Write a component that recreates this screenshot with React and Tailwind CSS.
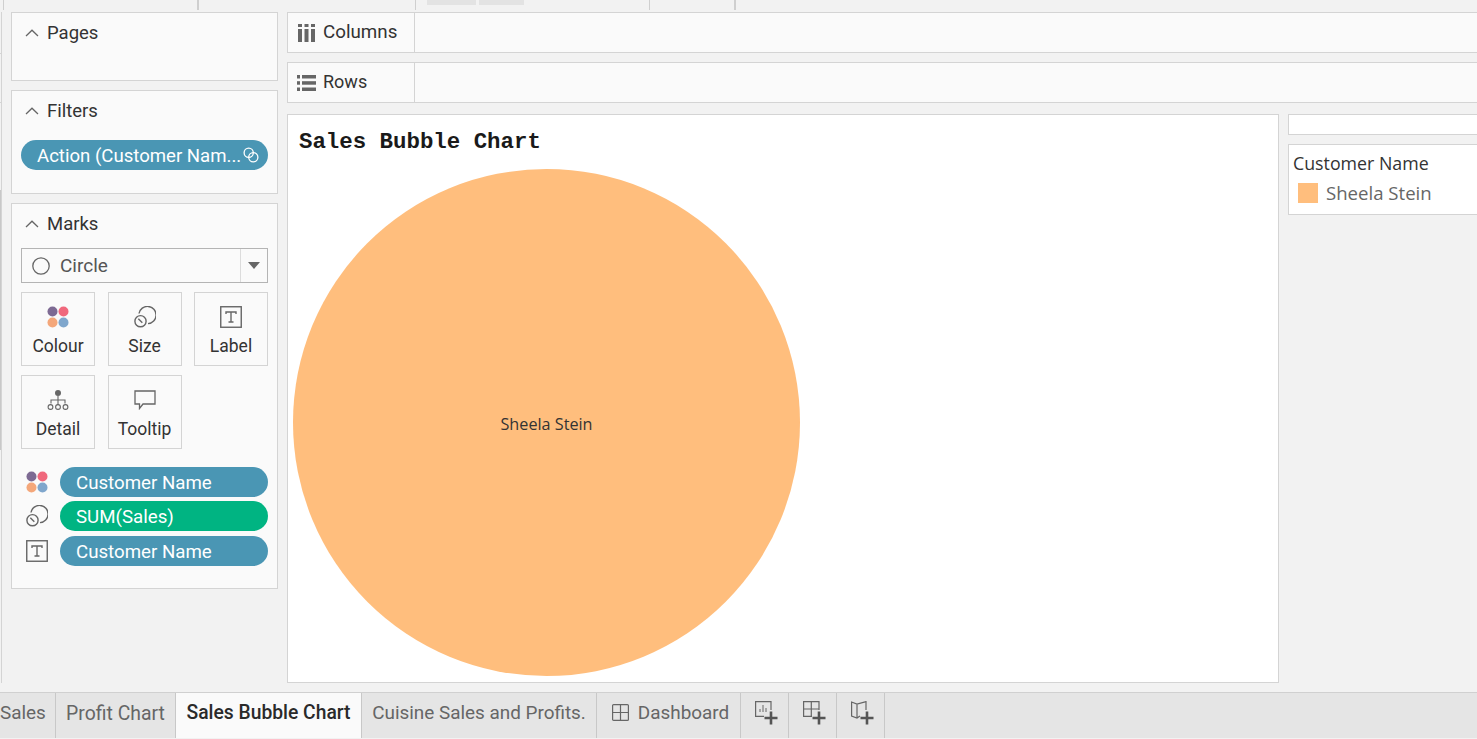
import React from "react";

const sans = "font-['Roboto','Liberation_Sans',sans-serif]";

function Chevron() {
  return (
    <svg width="14" height="8" viewBox="0 0 14 8" className="shrink-0" fill="none" stroke="#666" strokeWidth="1.3">
      <path d="M1 7 L7 1.2 L13 7" />
    </svg>
  );
}
function ColourIcon() {
  return (
    <svg width="22" height="22" viewBox="0 0 22 22">
      <circle cx="5.5" cy="5.5" r="5" fill="#7d6a93" />
      <circle cx="16.5" cy="5.5" r="5" fill="#f0687c" />
      <circle cx="5.5" cy="16.5" r="5" fill="#f4a77a" />
      <circle cx="16.5" cy="16.5" r="5" fill="#7fa6cc" />
    </svg>
  );
}
function SizeIcon() {
  return (
    <svg width="22" height="22" viewBox="0 0 22 22" fill="none" stroke="#666" strokeWidth="1.4">
      <path d="M5 7.5 A8.6 8.6 0 1 1 14 17.6" />
      <circle cx="6.5" cy="15.2" r="5.6" />
      <path d="M4.3 12.8 L8.3 16.8" />
    </svg>
  );
}
function LabelIcon() {
  return (
    <svg width="22" height="22" viewBox="0 0 22 22" fill="none" stroke="#666">
      <rect x="0.75" y="0.75" width="20.5" height="20.5" strokeWidth="1.4" />
      <path d="M6 8 V6 H16 V8 M11 6 V16 M8.5 16 H13.5" strokeWidth="1.4" />
    </svg>
  );
}
function DetailIcon() {
  return (
    <svg width="22" height="22" viewBox="0 0 22 22" fill="none" stroke="#666" strokeWidth="1.1">
      <circle cx="11" cy="4" r="3" fill="#666" stroke="none" />
      <path d="M11 7 V16 M4 14.5 V11 H18 V14.5" />
      <circle cx="3.5" cy="18" r="2.4" />
      <circle cx="11" cy="18" r="2.4" />
      <circle cx="18.5" cy="18" r="2.4" />
    </svg>
  );
}
function TooltipIcon() {
  return (
    <svg width="22" height="20" viewBox="0 0 22 20" fill="none" stroke="#666" strokeWidth="1.3">
      <path d="M1 1 H21 V14 H9 L5.5 18.5 V14 H1 Z" />
    </svg>
  );
}
function LinkIcon() {
  return (
    <svg width="16" height="16" viewBox="0 0 16 16" fill="none" stroke="#fff" strokeWidth="1.3">
      <circle cx="5.7" cy="5.7" r="4.6" />
      <circle cx="10.3" cy="10.3" r="4.6" />
    </svg>
  );
}

function Card({ title, className, children }) {
  return (
    <section className={`border border-[#d4d4d4] bg-[#fafafa] ${className}`}>
      <div className="flex items-center h-[40px] pl-[13px] gap-[8px]">
        <Chevron />
        <span className="text-[18.5px] leading-none text-[#333]">{title}</span>
      </div>
      {children}
    </section>
  );
}

function MarkButton({ icon, label }) {
  return (
    <div className="w-[74px] h-[74px] border border-[#d4d4d4] flex flex-col items-center">
      <div className="h-[22px] mt-[13px] flex items-center justify-center">{icon}</div>
      <span className="mt-[8px] text-[17.5px] leading-[20px] text-[#333]">{label}</span>
    </div>
  );
}

function Pill({ children, green }) {
  return (
    <div className={`h-[30px] w-[208px] rounded-full pl-[16px] pt-[2px] flex items-center text-[18.7px] text-white ${green ? "bg-[#00b482]" : "bg-[#4a96b4]"}`}>
      {children}
    </div>
  );
}

function ShelfRow({ icon, label, size }) {
  return (
    <div className="h-[41px] flex border border-[#d4d4d4] border-r-0 bg-[#fafafa]">
      <div className="w-[127px] border-r border-[#d4d4d4] flex items-center pl-[9px] gap-[7px]">
        <div className="w-[19px] flex justify-center">{icon}</div>
        <span className={`${size} leading-[24px] pb-[2px] text-[#333]`}>{label}</span>
      </div>
    </div>
  );
}

function Tab({ children, active, className = "" }) {
  return (
    <div className={`h-full flex items-center border-r border-[#c8c8c8] ${active ? "bg-[#fafafa] text-[#2a2a2a] font-medium text-[19.3px]" : "text-[#666] text-[18.9px]"} ${className}`}>
      {children}
    </div>
  );
}

function AddIcon({ children }) {
  return (
    <svg width="24" height="24" viewBox="0 0 24 24" fill="none">
      <g stroke="#666" strokeWidth="1.2">{children}</g>
      <path d="M16 10.5 V23.5 M9.5 17 H22.5" stroke="#555" strokeWidth="2.6" />
    </svg>
  );
}

export default function App() {
  return (
    <div className={`${sans} w-[1477px] h-[739px] overflow-hidden bg-[#f2f2f2] flex flex-col`}>
      <div className="h-[12px] flex shrink-0 pl-[3px]">
        <div className="w-[1px] h-[10px] bg-[#cfcfcf]" />
        <div className="ml-[193px] w-[2px] h-[10px] bg-[#cfcfcf]" />
        <div className="ml-[216px] w-[1px] h-[10px] bg-[#cfcfcf]" />
        <div className="ml-[11px] w-[49px] h-[5px] bg-[#e3e3e3]" />
        <div className="ml-[3px] w-[45px] h-[5px] bg-[#e3e3e3]" />
        <div className="ml-[125px] w-[1px] h-[10px] bg-[#cfcfcf]" />
        <div className="ml-[84px] w-[2px] h-[10px] bg-[#cfcfcf]" />
      </div>

      <div className="flex-1 min-h-0 flex pb-[9px]">
        <div className="w-[1px] shrink-0 flex flex-col pt-[41px]">
          <div className="h-[1px] bg-[#d4d4d4]" />
          <div className="h-[1px] mt-[48px] bg-[#d4d4d4]" />
          <div className="h-[260px] mt-[87px] bg-[#c8c8c8]" />
        </div>
        <div className="flex-1 min-w-0 flex border-l border-[#d4d4d4]">
          <aside className="w-[276px] shrink-0 pl-[9px] flex flex-col gap-[9px]">
            <Card title="Pages" className="h-[69px]" />
            <Card title="Filters" className="h-[104px]">
              <div className="mx-[9px] mt-[9px] h-[30px] rounded-full bg-[#4a96b4] text-white text-[18.6px] pl-[16px] pr-[9px] flex items-center justify-between">
                <span className="whitespace-nowrap pt-[4px]">Action (Customer Nam...</span>
                <LinkIcon />
              </div>
            </Card>
            <Card title="Marks" className="h-[386px]">
              <div className="mx-[9px] mt-[4px] h-[35px] border border-[#b4b4b4] flex items-center bg-[#fafafa]">
                <div className="flex-1 flex items-center pl-[10px] gap-[10px]">
                  <svg width="18" height="18" viewBox="0 0 18 18" fill="none" stroke="#666" strokeWidth="1.3"><circle cx="9" cy="9" r="8.2" /></svg>
                  <span className="text-[19px] text-[#555] pt-[2px]">Circle</span>
                </div>
                <div className="w-[27px] h-full border-l border-[#dcdcdc] flex items-center justify-center">
                  <svg width="12" height="7" viewBox="0 0 12 7"><path d="M0 0 H12 L6 7 Z" fill="#666" /></svg>
                </div>
              </div>
              <div className="mx-[9px] mt-[9px] grid grid-cols-[74px_74px_74px] justify-between gap-y-[9px]">
                <MarkButton icon={<ColourIcon />} label="Colour" />
                <MarkButton icon={<SizeIcon />} label="Size" />
                <MarkButton icon={<LabelIcon />} label="Label" />
                <MarkButton icon={<DetailIcon />} label="Detail" />
                <MarkButton icon={<TooltipIcon />} label="Tooltip" />
              </div>
              <div className="mx-[9px] mt-[18px] flex flex-col gap-[4px]">
                <div className="flex items-center justify-between"><div className="ml-[5px]"><ColourIcon /></div><Pill>Customer Name</Pill></div>
                <div className="flex items-center justify-between"><div className="ml-[5px]"><SizeIcon /></div><Pill green>SUM(Sales)</Pill></div>
                <div className="flex items-center justify-between mt-[1px]"><div className="ml-[5px]"><LabelIcon /></div><Pill>Customer Name</Pill></div>
              </div>
            </Card>
          </aside>

          <main className="flex-1 min-w-0 pl-[9px] flex flex-col gap-[9px]">
            <ShelfRow
              label="Columns"
              size="text-[18.8px]"
              icon={
                <svg width="17" height="18" viewBox="0 0 17 18" fill="#666">
                  <rect x="0" y="0" width="4" height="3" /><rect x="6.5" y="0" width="4" height="3" /><rect x="13" y="0" width="4" height="3" />
                  <rect x="0" y="5" width="4" height="13" /><rect x="6.5" y="5" width="4" height="13" /><rect x="13" y="5" width="4" height="13" />
                </svg>
              }
            />
            <ShelfRow
              label="Rows"
              size="text-[18px]"
              icon={
                <svg width="19" height="16" viewBox="0 0 19 16" fill="#666">
                  <rect x="0" y="0" width="3" height="3.5" /><rect x="5" y="0" width="14" height="3.5" />
                  <rect x="0" y="6.2" width="3" height="3.5" /><rect x="5" y="6.2" width="14" height="3.5" />
                  <rect x="0" y="12.5" width="3" height="3.5" /><rect x="5" y="12.5" width="14" height="3.5" />
                </svg>
              }
            />
            <div className="flex-1 min-h-0 flex gap-[9px] mt-[2px]">
              <div className="w-[992px] h-[569px] shrink-0 border border-[#d4d4d4] bg-white pl-[5px] flex flex-col">
                <div className="pl-[6px] pt-[14px] h-[54px] font-['Liberation_Mono',monospace] font-bold text-[22.4px] leading-[26px] text-[#1a1a1a]">Sales Bubble Chart</div>
                <div className="w-[507px] h-[507px] rounded-full bg-[#ffbe7d] flex items-center justify-center pt-[4px] text-[16.2px] text-[#333] font-['Open_Sans',sans-serif]">Sheela Stein</div>
              </div>
              <div className="flex-1 flex flex-col gap-[9px]">
                <div className="h-[21px] border border-[#d4d4d4] border-r-0 bg-white" />
                <div className="h-[71px] border border-[#d4d4d4] border-r-0 bg-white pl-[4px]">
                  <div className="text-[17.8px] leading-[20px] mt-[8px] font-medium text-[#333] font-['Open_Sans',sans-serif]">Customer Name</div>
                  <div className="flex items-center mt-[10px] pl-[5px] gap-[8px]">
                    <div className="w-[20px] h-[20px] bg-[#ffbe7d]" />
                    <span className="text-[18.6px] leading-[20px] text-[#666] font-['Open_Sans',sans-serif]">Sheela Stein</span>
                  </div>
                </div>
              </div>
            </div>
          </main>
        </div>
      </div>

      <div className="h-[47px] shrink-0 border-y-[1px] border-t-[#d0d0d0] border-b-[#f2f2f2] bg-[#e5e5e5] flex">
        <Tab className="w-[56px] pb-[4px]">Sales</Tab>
        <Tab className="w-[120px] justify-center pb-[4px]"><span className="text-[19.4px]">Profit Chart</span></Tab>
        <Tab active className="w-[186px] justify-center pb-[4px]">Sales Bubble Chart</Tab>
        <Tab className="w-[235px] justify-center pb-[4px]">Cuisine Sales and Profits.</Tab>
        <Tab className="w-[144px] justify-center gap-[9px] pl-[4px] pb-[4px]">
          <svg width="17" height="17" viewBox="0 0 17 17" fill="none" stroke="#666" strokeWidth="1.2" className="-mt-[2px]">
            <rect x="0.6" y="0.6" width="15.8" height="15.8" rx="1" /><path d="M8.5 0.6 V16.4 M0.6 8.5 H16.4" />
          </svg>
          Dashboard
        </Tab>
        <Tab className="w-[48px] justify-center pl-[4px] pb-[6px]">
          <AddIcon>
            <path d="M9 15.4 H0.6 V0.6 H16 V9" />
            <path d="M5 11 V8 M8 11 V4 M11 11 V7" strokeWidth="1" />
          </AddIcon>
        </Tab>
        <Tab className="w-[48px] justify-center pl-[4px] pb-[6px]">
          <AddIcon>
            <path d="M9 15.4 H0.6 V0.6 H16 V9 M0.6 8 H16 M8.3 0.6 V15.4" />
          </AddIcon>
        </Tab>
        <Tab className="w-[48px] justify-center pl-[4px] pb-[6px]">
          <AddIcon>
            <path d="M9 15 L6 17 L0.6 15 V1 L6 3 L15 0.6 V9 M6 3 V17" />
          </AddIcon>
        </Tab>
      </div>
    </div>
  );
}
